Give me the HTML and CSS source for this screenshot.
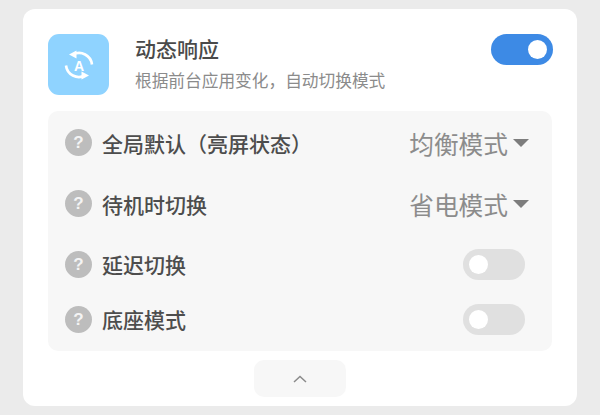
FILE: index.html
```html
<!DOCTYPE html>
<html lang="zh-CN">
<head>
  <meta charset="UTF-8">
  <meta name="viewport" content="width=device-width, initial-scale=1.0">
  <title>动态响应</title>
  <link rel="stylesheet" href="styles.css">
</head>
<body>
  <div class="card">
    <div class="header">
      <div class="app-icon">
        <svg width="36" height="36" viewBox="0 0 36 36" fill="none" stroke="#fff" stroke-width="2.6">
          <path d="M12 7.5A13 13 0 0 1 31 17.5"/>
          <path d="M5 18.5A13 13 0 0 0 24 28.5"/>
          <path d="M8 7.5L15.5 3.5L15.5 11.5Z" fill="#fff" stroke="none"/>
          <path d="M28 28.5L20.5 24.5L20.5 32.5Z" fill="#fff" stroke="none"/>
          <text x="18" y="23.5" class="icon-letter">A</text>
        </svg>
      </div>
      <div class="header-text">
        <div class="title">动态响应</div>
        <div class="subtitle">根据前台应用变化，自动切换模式</div>
      </div>
      <div class="switch switch-on"><span class="knob"></span></div>
    </div>

    <div class="panel">
      <div class="row row-first">
        <span class="help">?</span>
        <span class="label">全局默认（亮屏状态）</span>
        <span class="value">均衡模式</span>
        <span class="caret"></span>
      </div>
      <div class="row row-second">
        <span class="help">?</span>
        <span class="label">待机时切换</span>
        <span class="value">省电模式</span>
        <span class="caret"></span>
      </div>
      <div class="row row-third">
        <span class="help">?</span>
        <span class="label">延迟切换</span>
        <div class="switch switch-off"><span class="knob"></span></div>
      </div>
      <div class="row row-fourth">
        <span class="help">?</span>
        <span class="label">底座模式</span>
        <div class="switch switch-off"><span class="knob"></span></div>
      </div>
    </div>

    <div class="collapse">
      <svg width="16" height="10" viewBox="0 0 16 10" fill="none" stroke="#8a8a8a" stroke-width="1.5">
        <path d="M2 8L8 2.5L14 8"/>
      </svg>
    </div>
  </div>
</body>
</html>
```

FILE: styles.css
```css
/* General styles */
body {
  margin: 0;
  height: 415px;
  overflow: hidden;
  padding: 9px 23px 0;
  box-sizing: border-box;
  background-color: #ebebeb;
  font-family: "Noto Sans CJK SC", "Noto Sans", sans-serif;
}

.card {
  height: 397px;
  box-sizing: border-box;
  padding: 25px 25px 9px;
  background-color: #fff;
  border-radius: 12px;
  display: flex;
  flex-direction: column;
}

/* Header */
.header {
  display: flex;
  align-items: flex-start;
  height: 61px;
}

.app-icon {
  width: 61px;
  height: 61px;
  flex-shrink: 0;
  border-radius: 11px;
  background-color: #8fd3ff;
  display: flex;
  align-items: center;
  justify-content: center;
}

.icon-letter {
  font-family: "Liberation Sans", sans-serif;
  font-size: 14px;
  font-weight: 700;
  fill: #fff;
  stroke: none;
  text-anchor: middle;
}

.header-text {
  flex: 1;
  margin-left: 26px;
}

.title {
  font-size: 21px;
  line-height: 30px;
  font-weight: 500;
  color: #4a4a4a;
  margin-top: -1px;
}

.subtitle {
  font-size: 16.7px;
  line-height: 24px;
  color: #8b8b8b;
  margin-top: 5px;
}

/* Switches */
.switch {
  width: 62px;
  height: 31px;
  border-radius: 16px;
  flex-shrink: 0;
  display: flex;
  align-items: center;
}

.switch-on {
  background-color: #3d8ae5;
  justify-content: flex-end;
  padding-right: 6px;
  box-sizing: border-box;
  margin-right: -1px;
}

.switch-off {
  background-color: #e0e0e0;
  padding-left: 6px;
  box-sizing: border-box;
  margin-left: auto;
  margin-right: 27px;
}

.knob {
  width: 19px;
  height: 19px;
  border-radius: 50%;
  background-color: #fff;
}

/* Settings panel */
.panel {
  height: 240px;
  margin-top: 16px;
  background-color: #f7f7f7;
  border-radius: 10px;
  padding-left: 17px;
  box-sizing: border-box;
}

.row {
  display: flex;
  align-items: center;
}

.row-first {
  height: 63px;
}

.row-second {
  height: 59px;
}

.row-third {
  height: 62px;
}

.row-fourth {
  height: 48px;
}

.help {
  width: 27px;
  height: 27px;
  flex-shrink: 0;
  border-radius: 50%;
  background-color: #bdbdbd;
  color: #f4f4f4;
  font-family: "Liberation Sans", sans-serif;
  font-size: 17px;
  font-weight: 700;
  line-height: 27px;
  text-align: center;
}

.label {
  margin-left: 10px;
  font-size: 21px;
  font-weight: 500;
  color: #4d4d4d;
}

.value {
  margin-left: auto;
  font-size: 24.7px;
  color: #8c8c8c;
}

.caret {
  width: 0;
  height: 0;
  margin-left: 5px;
  margin-right: 23px;
  border-left: 8px solid transparent;
  border-right: 8px solid transparent;
  border-top: 8px solid #7d7d7d;
}

/* Collapse button */
.collapse {
  width: 92px;
  height: 37px;
  margin: 9px auto 0;
  background-color: #f7f7f7;
  border-radius: 10px;
  display: flex;
  align-items: center;
  justify-content: center;
}
```
